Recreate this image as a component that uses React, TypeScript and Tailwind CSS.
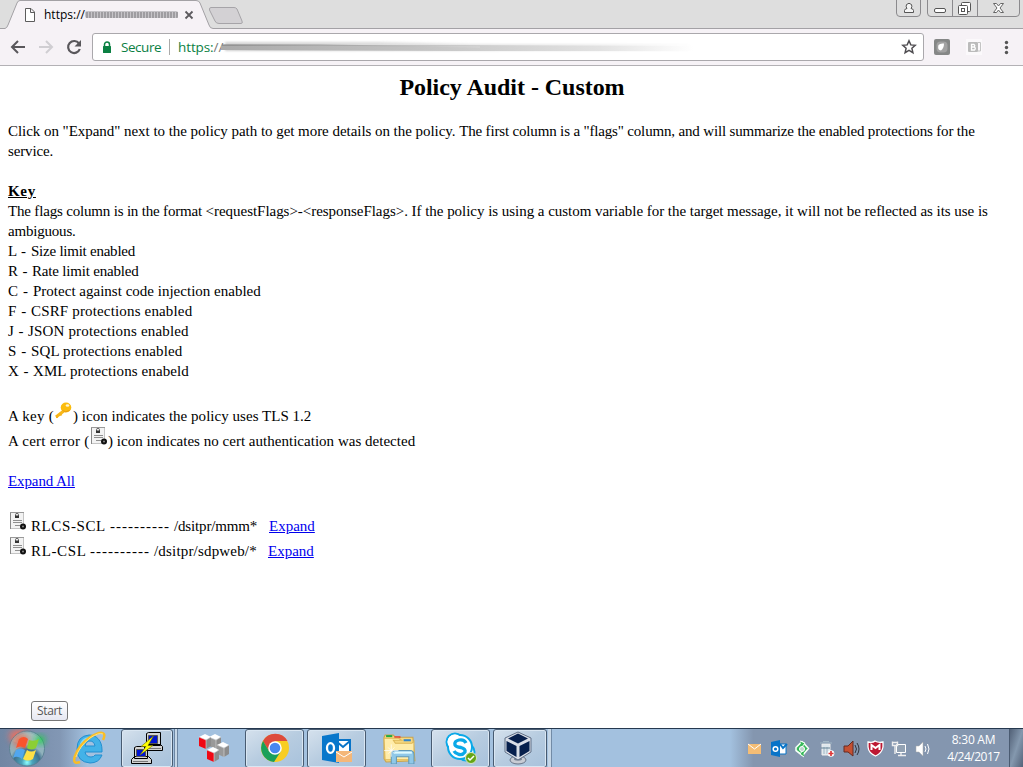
import React from "react";

const chromeFont = "font-['Open_Sans','Noto_Sans',sans-serif]";

function CertIcon() {
  return (
    <svg width="18" height="20" viewBox="0 0 18 20" className="block shrink-0">
      <rect x="1.5" y="1.5" width="13" height="16" fill="#f3f3f3" stroke="#c4c4c4" />
      <path d="M1.5 1v17" stroke="#888" />
      <path d="M1 1.5h14" stroke="#999" />
      <path d="M6.500 5V3.800a1.500 1.500 0 0 1 3 0V5" fill="none" stroke="#666" />
      <rect x="6" y="4.500" width="4" height="2.500" fill="#333" />
      <path d="M4 9.500h9M4 11.500h9M6 14.500h5" stroke="#8f8f8f" />
      <circle cx="14" cy="15.500" r="3" fill="#111" />
      <circle cx="14" cy="15.500" r="1" fill="#888" />
    </svg>
  );
}

function KeyIcon() {
  return (
    <svg width="18" height="18" viewBox="0 0 18 18" className="block shrink-0">
      <path d="M10 9L1 16" stroke="#f8b818" strokeWidth="3" />
      <path d="M2 14v3M5 12.500l1.500 2" stroke="#f5b21c" strokeWidth="2" />
      <ellipse cx="11" cy="6.500" rx="5.300" ry="5" fill="#fbbc0d" />
      <ellipse cx="12.500" cy="4.500" rx="1.800" ry="1.200" fill="#fff4d0" />
      <path d="M7.500 9.500q3 2.500 7 0" stroke="#e69b18" fill="none" />
    </svg>
  );
}

function BrowserTabs() {
  return (
    <div className="relative h-7 w-full shrink-0 bg-[#dedede]">
      <svg width="1023" height="30" viewBox="0 0 1023 30" className="absolute left-0 top-0">
        <path d="M0 28.500H5Q7 28 8 25L17 3Q18 .5 20 .5H196Q199 .5 200 3L209 25Q210 28.500 213 28.500H1023V30H0Z" fill="#f6f2f6" />
        <path d="M0 28.500H5Q7 28 8 25L17 3Q18 .5 20 .5H196Q199 .5 200 3L209 25Q210 28.500 213 28.500H1023" fill="none" stroke="#a3a1a5" />
        <path d="M211 7.500H234Q236 7.500 237 9L242 21Q243 23.500 241 23.500H219Q216 23.500 215 21L209.500 10Q209 7.500 211 7.500Z" fill="#d3d1d4" stroke="#a6a4a8" />
        <path d="M25.500 8.500H31L34.500 12V21.500H25.500ZM30.500 8.500V12.500H34.500" fill="#fff" stroke="#5c5c5c" />
        <path d="M185.500 11.500l7 7M192.500 11.500l-7 7" stroke="#5c5a5e" strokeWidth="1.800" />
        <path d="M896.500 0V13Q896.500 16.500 900 16.500H917Q920.500 16.500 920.500 13V0M927.500 0V13Q927.500 16.500 931 16.500H1016Q1019.500 16.500 1019.500 13V0M952.500 0V16M977.500 0V16" fill="none" stroke="#8b8a8d" />
        <path d="M904.500 12.500V10.500Q905 8.500 907 8.500Q905.500 7 906.500 4.500Q909 2 911.500 4.500Q912.500 7 911 8.500Q913 8.500 913.500 10.500V12.500Z" fill="#f5f5f5" stroke="#555" />
        <rect x="934.500" y="8.500" width="11" height="4" rx="1.500" fill="#fff" stroke="#555" />
        <rect x="961.500" y="2.500" width="9" height="9" rx="1" fill="#fff" stroke="#555" />
        <rect x="958.500" y="5.500" width="9" height="9" rx="1" fill="#fff" stroke="#555" />
        <rect x="961.500" y="8.500" width="3" height="3" fill="#fff" stroke="#555" />
        <path d="M993.500 3.500h3l2 2.500 2-2.500h3l-3.500 4.500 3.500 4.500h-3l-2-2.500-2 2.500h-3l3.500-4.500z" fill="#fff" stroke="#666" strokeWidth="1" />
      </svg>
      <div className={`absolute left-[44px] top-[6px] text-[12px] leading-[18px] text-black ${chromeFont}`}>https://</div>
      <svg className="absolute left-[83px] top-[9px]" width="98" height="12">
        <defs>
          <pattern id="scratch" width="3" height="12" patternUnits="userSpaceOnUse"><path d="M1 0V12" stroke="#77757a" /></pattern>
          <filter id="soft"><feGaussianBlur stdDeviation=".6" /></filter>
        </defs>
        <rect x="2" y="2" width="93" height="7" rx="2" fill="#c6c4c8" filter="url(#soft)" />
        <rect x="2" y="3" width="93" height="6" fill="url(#scratch)" filter="url(#soft)" />
      </svg>
    </div>
  );
}

function Toolbar() {
  return (
    <div className="flex h-[38px] w-full shrink-0 items-start border-b border-[#b3b1b5] bg-[#f6f2f6] pt-[5px]">
      <svg width="92" height="28" viewBox="0 33 92 28" className="shrink-0">
        <path d="M25 47H12M18 41l-6 6 6 6" fill="none" stroke="#59575b" strokeWidth="2" />
        <path d="M39 47H52M46 41l6 6-6 6" fill="none" stroke="#d0ced2" strokeWidth="2" />
        <path d="M79 43.500A6 6 0 1 0 79.800 49" fill="none" stroke="#59575b" strokeWidth="2.200" />
        <path d="M81 40V46.500H74.500Z" fill="#59575b" />
      </svg>
      <div className={`flex h-7 w-[832px] items-center rounded-[3px] border border-[#aaa8ac] bg-white text-[13.500px] text-[#0b8043] ${chromeFont}`}>
        <svg width="10" height="13" viewBox="0 0 10 13" className="ml-[9px]">
          <path d="M2.500 6V3.500a2.500 2.500 0 0 1 5 0V6" stroke="#0b8043" strokeWidth="1.500" fill="none" />
          <rect x="1" y="5" width="8" height="7" rx=".5" fill="#0b8043" />
        </svg>
        <span className="ml-[9px] w-[40px] whitespace-nowrap tracking-[-0.45px]">Secure</span>
        <span className="ml-[8px] mr-[8px] h-4 w-px bg-[#aaa]" />
        <span className="w-[45px] whitespace-nowrap tracking-[-0.1px]">https:<span className="text-[#777]">//</span></span>
        <svg width="475" height="16" className="-ml-[3px]">
          <defs>
            <linearGradient id="smear"><stop stopColor="#aaa" /><stop offset=".4" stopColor="#c2c2c2" /><stop offset=".8" stopColor="#e2e2e2" /><stop offset="1" stopColor="#fff" /></linearGradient>
            <linearGradient id="line"><stop stopColor="#777" /><stop offset=".5" stopColor="#aaa" /><stop offset="1" stopColor="#d8d8d8" /></linearGradient>
            <filter id="haze" x="-2%" y="-30%" width="104%" height="160%"><feGaussianBlur stdDeviation="1 .8" /></filter>
          </defs>
          <path d="M5 3H160L250 5H474V12H5Z" fill="url(#smear)" opacity=".5" filter="url(#haze)" />
          <path d="M1 6H240L474 7V12H240L1 11Z" fill="url(#smear)" />
          <path d="M2 5.500H100L260 7.500V8.500L100 6.500H2Z" fill="url(#line)" />
        </svg>
        <svg width="16" height="16" viewBox="0 0 16 16" className="ml-auto mr-[6px]">
          <path d="M8 1.800l1.800 4.100 4.400.4-3.300 3 1 4.400L8 11.400l-3.900 2.300 1-4.400-3.300-3 4.400-.4Z" fill="#fff" stroke="#4f4d51" strokeWidth="1.500" />
        </svg>
      </div>
      <svg width="99" height="28" viewBox="924 33 99 28" className="shrink-0">
        <rect x="934" y="39" width="16" height="16" rx="2" fill="#858786" />
        <rect x="936.500" y="41.500" width="11" height="11" rx="4" fill="#a2a2a2" />
        <path d="M938.500 45Q940 43 944 43.500Q944 48 941 50.500Q937 50 938.500 45Z" fill="#fff" />
        <rect x="966" y="39" width="16" height="16" fill="#fbf9fb" />
        <rect x="968" y="42" width="10" height="10" rx="1" fill="#bbb" />
        <path d="M971.500 44.500h2.500q1.500 1 0 2.500h-2.500zM971.500 47h3q1.500 1.500 0 3h-3z" fill="none" stroke="#fff" strokeWidth="1.300" />
        <path d="M978 42.500h2.500V51H978" fill="none" stroke="#c4c4c4" />
        <circle cx="1006.500" cy="42.500" r="1.700" fill="#555" /><circle cx="1006.500" cy="47.500" r="1.700" fill="#555" /><circle cx="1006.500" cy="52.500" r="1.700" fill="#555" />
      </svg>
    </div>
  );
}

const flags = [
  { letter: "L", text: "Size limit enabled", prefix: "w-[23px] tracking-[0.35px]", rest: "tracking-[-0.24px]" },
  { letter: "R", text: "Rate limit enabled", prefix: "w-[24px] tracking-[0.35px]", rest: "tracking-[-0.19px]" },
  { letter: "C", text: "Protect against code injection enabled", prefix: "w-[25px] tracking-[0.6px]", rest: "tracking-[0.01px]" },
  { letter: "F", text: "CSRF protections enabled", prefix: "w-[23px] tracking-[0.55px]", rest: "tracking-[0.16px]" },
  { letter: "J", text: "JSON protections enabled", prefix: "w-[20px] tracking-[0.4px]", rest: "tracking-[0.17px]" },
  { letter: "S", text: "SQL protections enabled", prefix: "w-[23px] tracking-[0.55px]", rest: "tracking-[0.12px]" },
  { letter: "X", text: "XML protections enabeld", prefix: "w-[25px] tracking-[0.4px]", rest: "tracking-[0.1px]" },
];

const policies = [
  { name: "RLCS-SCL", path: "/dsitpr/mmm*", nameClass: "w-[79px] tracking-[0.6px]", pathClass: "w-[95px] tracking-[-0.15px]" },
  { name: "RL-CSL", path: "/dsitpr/sdpweb/*", nameClass: "w-[59px] tracking-[0.65px]", pathClass: "w-[114px] tracking-[0.18px]" },
];

function PolicyPage() {
  return (
    <main className="flex min-h-0 flex-1 flex-col whitespace-nowrap bg-white px-2 pt-2 font-['Liberation_Serif','Times_New_Roman',serif] text-[15px] leading-5 text-black">
      <h1 className="h-[28px] pl-px text-center text-[24px] font-bold leading-[27px] tracking-[-0.04px]">Policy Audit - Custom</h1>
      <div className="mt-[19px]">
        <span className="tracking-[-0.043px]">Click on "Expand" next to the policy path to get more details on the policy. </span>
        <span className="tracking-[-0.165px]">The first column is a "flags" column, and will summarize the enabled protections for the</span>
      </div>
      <div className="tracking-[-0.15px]">service.</div>
      <div className="mt-5 font-bold"><span className="underline tracking-[0.7px]">Key</span></div>
      <div>
        <span className="tracking-[-0.18px]">The flags column is in the format </span>
        <span className="tracking-[-0.036px]">&lt;requestFlags&gt;-&lt;responseFlags&gt;. If the policy is using a custom variable for the target message, it will not be reflected as its use is</span>
      </div>
      <div className="tracking-[-0.2px]">ambiguous.</div>
      {flags.map((f) => (
        <div key={f.letter} className="flex">
          <span className={f.prefix}>{f.letter} -</span>
          <span className={f.rest}>{f.text}</span>
        </div>
      ))}
      <div className="mt-5 flex h-[25px] items-end"><span className="w-[47px] tracking-[0.25px]">A key (</span><span className="mb-[7px] h-[18px]"><KeyIcon /></span><span className="tracking-[0.03px]">) icon indicates the policy uses TLS 1.2</span></div>
      <div className="flex h-[25px] items-end"><span className="w-[82px] tracking-[0.25px]">A cert error (</span><span className="mb-[5px] h-5"><CertIcon /></span><span className="tracking-[0.02px]">) icon indicates no cert authentication was detected</span></div>
      <div className="mt-5"><span className="text-[#0000ee] underline tracking-[-0.1px]">Expand All</span></div>
      {policies.map((p, i) => (
        <div key={p.name} className={`flex h-[25px] items-end ${i === 0 ? "mt-5" : ""}`}>
          <span className="mb-[5px] ml-px mr-[4px] h-5"><CertIcon /></span>
          <span className={p.nameClass}>{p.name}</span>
          <span className="w-[64px] tracking-[1px]">----------</span>
          <span className={p.pathClass}>{p.path}</span>
          <span className="text-[#0000ee] underline">Expand</span>
        </div>
      ))}
    </main>
  );
}

function Task({ className, active = true, children }: { className: string; active?: boolean; children: React.ReactNode }) {
  return (
    <div className={`flex h-[39px] shrink-0 items-center justify-center ${active ? "rounded-[3px] border border-[#485b71] bg-linear-to-br from-[#d5e1ed] via-[#b7cce0] to-[#a8c2dc] shadow-[inset_0_0_0_1px_#d9e6f2]" : ""} ${className}`}>
      {children}
    </div>
  );
}

function Cube({ x, y, side }: { x: number; y: number; side: string }) {
  return (
    <g transform={`translate(${x} ${y})`}>
      <path d="M0 3L6 0L12 3L7 6Z" fill="#fff" />
      <path d="M0 3L7 6V15L0 12Z" fill={side} />
      <path d="M7 6L12 3V12L7 15Z" fill="#8c8c8c" />
      <path d="M0 3L7 6V15M7 6L12 3" fill="none" stroke="#ddd" strokeWidth=".6" />
    </g>
  );
}

function Taskbar() {
  return (
    <footer className="flex h-[39px] w-full shrink-0 items-center overflow-hidden border-t border-[#25384f] bg-[#a3c1df]">
      <Task active={false} className="w-[60px] justify-start bg-linear-to-r from-[#7186a3] to-[#8297b4]">
        <svg width="56" height="39" viewBox="0 0 56 39">
          <defs>
            <radialGradient id="orb" cy=".9"><stop stopColor="#8fffff" /><stop offset=".3" stopColor="#4ba4bb" /><stop offset=".75" stopColor="#40728e" /><stop offset="1" stopColor="#91b3bd" /></radialGradient>
            <filter id="glow" x="-50%" y="-50%" width="200%" height="200%"><feGaussianBlur stdDeviation="3" /></filter>
          </defs>
          <ellipse cx="19" cy="7" rx="10" ry="6" fill="#ff705b" filter="url(#glow)" opacity=".8" />
          <circle cx="27" cy="19.500" r="17.500" fill="url(#orb)" stroke="#5d8295" />
          <path d="M13 12Q27-4 42 12Q27 20 13 12" fill="#c9e2ce" opacity=".3" />
          <ellipse cx="21" cy="12" rx="8" ry="7" fill="#ff5b38" filter="url(#glow)" opacity=".7" />
          <ellipse cx="40" cy="11" rx="5" ry="4" fill="#18d045" filter="url(#glow)" />
          <path d="M19 10Q24 6 28 10L25 19Q20 16 16 19Z" fill="#fa542d" />
          <path d="M29 11Q34 13 39 10L36 19Q31 22 27 19Z" fill="#8bcf35" />
          <path d="M16 21Q21 18 25 21L22 30Q17 26 13 29Z" fill="#51a7ee" />
          <path d="M27 21Q31 24 36 21L33 30Q28 33 23 30Z" fill="#ffe046" />
        </svg>
      </Task>
      <Task active={false} className="w-[61px] bg-linear-to-r from-[#8297b4] to-[#a3c1df] to-[45%]">
        <svg width="36" height="36" viewBox="0 0 36 36" className="-ml-[3px]">
          <path fillRule="evenodd" d="M18 5C26 5 31 11 31 20V22H14Q15 27 20 27Q23 27 24 25H31Q28 33 19 33Q6 32 6 19Q6 6 18 5ZM14 16H24Q23 11 19 11Q15 11 14 16Z" fill="#43b2e8" stroke="#238fd0" />
          <path d="M9 19Q10 8 19 8" fill="none" stroke="#83d6f7" strokeWidth="2" />
          <path d="M9 32Q1 35 4 26Q8 15 18 8Q30 0 33 4Q34 6 32 10" fill="none" stroke="#f9bd26" strokeWidth="2.500" />
          <path d="M5 27Q8 17 19 8Q28 2 32 4" fill="none" stroke="#ffe27b" />
        </svg>
      </Task>
      <Task className="w-[52px]">
        <svg width="34" height="34" viewBox="130 731 34 34">
          <path d="M146.500 733.500l2-1h12v13h-14zM144.500 746.500l2-2h14l2 2v4h-18zM134.500 747.500l2-1h11v12h-13zM131.500 759.500l3-3h14l3 3v4h-20z" fill="#d4d4d4" stroke="#000" />
          <path d="M148.500 735.500h9v8h-9zM136.500 749.500h9v7h-9z" fill="#0014d3" stroke="#555" />
          <path d="M146 748.500h15M133 761.500h15" stroke="#777" />
          <path d="M153.500 736L141 746.500h5l-6 8.500 13-9.500h-5z" fill="#ff0" stroke="#716e00" strokeWidth=".6" />
        </svg>
      </Task>
      <span className="ml-px h-[39px] w-[4px] border-x border-[#6d87a4] bg-[#c6d7e7]" />
      <Task active={false} className="w-[67px]">
        <svg width="32" height="30" viewBox="0 0 32 30" className="ml-1">
          <Cube x={11} y={1} side="#999" />
          <Cube x={19} y={9} side="#999" />
          <Cube x={1} y={1} side="#f00814" />
          <Cube x={9} y={14} side="#f00814" />
        </svg>
      </Task>
      <Task className="w-[59px]">
        <svg width="30" height="30" viewBox="0 0 30 30">
          <circle cx="15" cy="15" r="14" fill="#f8cd22" />
          <path d="M3 8A14 14 0 0 1 27.500 8H15L9 18Z" fill="#dd4b3c" /><path d="M3 8A14 14 0 0 0 14 29L21 18H9Z" fill="#19a05b" />
          <circle cx="15" cy="15" r="6.800" fill="#fff" /><circle cx="15" cy="15" r="5.300" fill="#4787ee" />
        </svg>
      </Task>
      <Task className="ml-[3px] w-[59px]">
        <svg width="32" height="32" viewBox="0 0 32 32">
          <path d="M14 8h15v13H14z" fill="#fff" stroke="#0874c8" strokeWidth="2" /><path d="M15 9l7 6 7-6" fill="none" stroke="#0874c8" strokeWidth="2" />
          <path d="M1 4l17-3v30L1 28z" fill="#0877cb" />
          <ellipse cx="9.500" cy="16" rx="3.500" ry="4.800" fill="none" stroke="#fff" strokeWidth="2.300" />
          <path d="M15 19h16v11H15z" fill="#f4b779" /><path d="M15 20l8 5 8-5" fill="none" stroke="#fff" />
        </svg>
      </Task>
      <Task active={false} className="w-[65px] pl-[2px]">
        <svg width="33" height="31" viewBox="0 0 32 30">
          <path d="M1 4l1-2h8l2 2h17l2 23-28 1-2-3z" fill="#f5d77f" stroke="#c8a34e" />
          <path d="M3 2h6v2H3z" fill="#20aa43" /><path d="M11 3h6v2h-6z" fill="#e35041" /><path d="M20 6h7v2h-7z" fill="#3184cb" />
          <path d="M1 5h14l3 2h-8l2 3h16l2-2v18H2z" fill="#ffeca9" stroke="#ddb755" />
          <path d="M8 30V21q0-4 4-4h14q4 0 4 4v9h-5v-7H13v7z" fill="#8fc8e8" stroke="#6299b8" /><path d="M11 19h17" stroke="#e0fbff" strokeWidth="2" />
          <path d="M8 11v12M1 17h14M5 14l6 6M11 14l-6 6" stroke="#fff" strokeWidth=".7" />
        </svg>
      </Task>
      <Task className="w-[59px]">
        <svg width="34" height="34" viewBox="0 0 34 34">
          <circle cx="11" cy="11" r="8.500" fill="#fff" stroke="#0ba9e8" strokeWidth="2" /><circle cx="22" cy="21" r="8.500" fill="#fff" stroke="#0ba9e8" strokeWidth="2" /><circle cx="16" cy="16" r="12" fill="#fff" stroke="#0ba9e8" strokeWidth="2" /><circle cx="11" cy="11" r="7.500" fill="#fff" />
          <path d="M22 12Q20 8 15 9Q10 10 11 14Q12 16 17 16.500Q22 18 21 21Q18 25 14 23Q11 22 10 20" fill="none" stroke="#0ba9e8" strokeWidth="3.300" />
          <circle cx="27" cy="27" r="5.500" fill="#65a514" stroke="#d6e6c3" /><path d="M24 27l2 2 4-4" fill="none" stroke="#fff" strokeWidth="1.500" />
        </svg>
      </Task>
      <Task className="ml-[3px] w-[54px]">
        <svg width="30" height="34" viewBox="0 0 30 34" className="-ml-[4px]">
          <ellipse cx="15" cy="29" rx="8" ry="4" fill="#c8ccd4" stroke="#697588" /><ellipse cx="15" cy="28" rx="4" ry="1.500" fill="#727e8f" />
          <path d="M2 7L15 1l13 6v14l-13 8-13-8Z" fill="#d9dee7" stroke="#617087" />
          <path d="M5 7.500l10-5 10 5-10 5ZM3.500 10l10 5v11l-10-6ZM26.500 10l-10 5v11l10-6Z" fill="#07204d" />
        </svg>
      </Task>
      <span className="ml-px h-[39px] w-[4px] border-r border-[#728ba6] bg-[#c6d7e7]" />
      <div className="ml-auto flex h-[39px] w-[293px] items-center bg-linear-to-r from-[#a3c1df] to-[#8496af] to-[8%]">
        <svg width="215" height="24" viewBox="730 736 215 24" className="shrink-0">
          <path d="M748 744h13v10h-13z" fill="#f4bd75" /><path d="M748 744l6.500 5 6.500-5" fill="none" stroke="#fff" />
          <path d="M778 744h8v10h-8z" fill="#fff" stroke="#0874c8" /><path d="M771 742l9-2v17l-9-2z" fill="#0874c8" /><path d="M780 744l3 4 4-4" fill="none" stroke="#0874c8" strokeWidth="2" /><circle cx="775.500" cy="749" r="2.300" fill="none" stroke="#fff" strokeWidth="1.500" />
          <path d="M796 747.500l6-6 2.500 2.500 4 4.500-6 7-6.500-5z" fill="#37b85a" stroke="#f5fff7" strokeWidth="1.600" strokeLinejoin="round" />
          <path d="M800 741l5 2-3 4M804 757l-4-3 3-4" fill="#37b85a" stroke="#f5fff7" />
          <circle cx="802" cy="749" r="2.500" fill="#bdd6cc" stroke="#fff" />
          <path d="M822 744h8v11h-8z" fill="#dce7ed" stroke="#eee" /><path d="M820 743h12M823 741.500h6M824 747v7M827 747v7" stroke="#a1b6c4" /><path d="M821 748h9" stroke="#668496" /><circle cx="831" cy="753.500" r="3.300" fill="#fff" /><path d="M831 751v5M828.500 753.500h5" stroke="#dd3939" strokeWidth="1.700" />
          <path d="M844 746h4l5-5v15l-5-4h-4z" fill="#c55032" stroke="#642b22" /><path d="M855 745q3 4 0 8M857 743q4 6 0 12" fill="none" stroke="#33353e" />
          <path d="M868 742q5 1 7-1 3 2 8 1v5q-1 6-7.500 9-7-3-7.500-9z" fill="#bd1833" stroke="#fff" strokeWidth="1.300" /><path d="M871.500 750v-5l4 3 4-3v5" fill="none" stroke="#fff" strokeWidth="2" />
          <path d="M896.500 744.500h9v8h-9z" fill="#93a2b3" stroke="#fff" /><path d="M892.500 741.500v4h5v-4M895 745v9M892.500 742.500h5M898 755.500h8M901 753v2" fill="none" stroke="#eee" strokeWidth="1.400" />
          <path d="M916 746h3l4-4v14l-4-4h-3z" fill="#fff" stroke="#aaa" strokeWidth=".5" /><path d="M925 746q2 3 0 6M927.500 744q3 5 0 10" fill="none" stroke="#fff" />
        </svg>
        <div className={`w-[57px] whitespace-nowrap text-center text-[12px] leading-[17px] tracking-[-0.5px] text-white ${chromeFont}`}><span className="tracking-[-0.25px]">8:30 AM</span><br />4/24/2017</div>
        <div className="ml-auto h-[39px] w-[14px] border-l border-[#4a5b71] bg-linear-to-br from-[#536278] via-[#8498ae] to-[#536278]" />
      </div>
    </footer>
  );
}

export default function App() {
  return (
    <div className="relative flex h-[767px] w-[1023px] flex-col overflow-hidden">
      <BrowserTabs />
      <Toolbar />
      <PolicyPage />
      <Taskbar />
      <div className={`absolute left-[31px] top-[701px] flex h-5 w-[37px] items-center justify-center rounded-[3px] border border-[#777] bg-linear-to-b from-white to-[#e6e7f1] text-[12px] tracking-[-0.3px] text-[#555] ${chromeFont}`}>Start</div>
    </div>
  );
}
